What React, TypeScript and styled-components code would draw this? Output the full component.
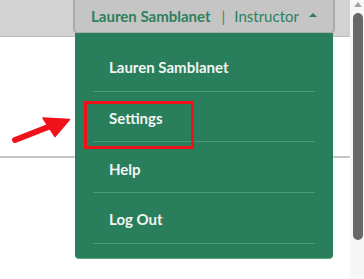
import React from "react";
import styled, { createGlobalStyle } from "styled-components";

const GlobalStyle = createGlobalStyle`
  html, body { margin: 0; padding: 0; background: #ffffff; overflow: hidden; }
  body { font-family: Lato, "Open Sans", "Liberation Sans", sans-serif; }
  * { box-sizing: border-box; }
`;

const Page = styled.div`
  position: relative;
  width: 364px;
  height: 279px;
  display: flex;
  align-items: stretch;
  background: #ffffff;
`;

const Main = styled.div`
  width: 350px;
  display: flex;
  flex-direction: column;
`;

const TopBar = styled.header`
  flex: none;
  height: 37px;
  background: #d2d2d2;
  border-bottom: 1px solid #bcbcbc;
  display: flex;
  justify-content: flex-end;
  align-items: flex-start;
  padding-right: 15px;
`;

const UserMenu = styled.div`
  position: relative;
  width: 262px;
`;

const UserButton = styled.button`
  width: 100%;
  height: 34px;
  margin: 0;
  background: #c5c5c5;
  border: 2px solid #aaacb1;
  border-top: none;
  border-radius: 0 0 5px 5px;
  display: flex;
  align-items: center;
  justify-content: center;
  padding: 0 0 1px 0;
  font-family: Lato, "Open Sans", sans-serif;
  font-size: 15px;
  color: #2d805b;
  cursor: pointer;
`;

const UserName = styled.span`
  font-weight: 700;
`;

const Divider = styled.span`
  margin: 0 9px 0 11px;
  font-weight: 400;
  color: #3a8a64;
`;

const Role = styled.span`
  font-weight: 400;
`;

const Caret = styled.span`
  margin-left: 10px;
  width: 0;
  height: 0;
  border-left: 4px solid transparent;
  border-right: 4px solid transparent;
  border-bottom: 4px solid #2d805b;
  margin-bottom: 2px;
`;

const Dropdown = styled.ul`
  position: absolute;
  top: 33px;
  left: 2px;
  right: 2px;
  margin: 0;
  list-style: none;
  background: #297e5c;
  border-bottom: 1px solid #5ea986;
  border-radius: 0 0 4px 4px;
  padding: 8px 18px 14px;
  z-index: 2;
`;

const MenuItem = styled.li<{ $highlighted?: boolean }>`
  position: relative;
  height: 50.7px;
  padding: 3px 0 0 16px;
  display: flex;
  align-items: center;
  border-bottom: 1px solid #4f9878;
  color: #f2f4f2;
  font-size: 15px;
  font-weight: 700;
  &::after {
    content: "";
    display: ${(p) => (p.$highlighted ? "block" : "none")};
    position: absolute;
    top: 9px;
    left: -9px;
    width: 104px;
    height: 42px;
    border: 3px solid #f0121b;
  }
`;

const Content = styled.div`
  flex: none;
  height: 242px;
  padding-top: 119px;
`;

const Rule = styled.div`
  height: 2px;
  background: #c4c4c4;
`;

const Scrollbar = styled.div`
  width: 14px;
  background: #f7f7f7;
  display: flex;
  flex-direction: column;
  align-items: center;
  padding: 2px 0 0 1px;
`;

const ScrollArrow = styled.span`
  width: 0;
  height: 0;
  border-left: 4.5px solid transparent;
  border-right: 4.5px solid transparent;
  border-bottom: 5px solid #a3a3a3;
`;

const Thumb = styled.div`
  margin-top: 6px;
  width: 10px;
  height: 227px;
  border-radius: 5px;
  background: #686868;
`;

const ArrowMark = styled.svg`
  position: absolute;
  left: 0;
  top: 100px;
  pointer-events: none;
`;

export default function App() {
  const items = ["Lauren Samblanet", "Settings", "Help", "Log Out"];
  return (
    <>
      <GlobalStyle />
      <Page>
        <Main>
          <TopBar>
            <UserMenu>
              <UserButton>
                <UserName>Lauren Samblanet</UserName>
                <Divider>|</Divider>
                <Role>Instructor</Role>
                <Caret />
              </UserButton>
              <Dropdown>
                {items.map((label) => (
                  <MenuItem key={label} $highlighted={label === "Settings"}>
                    {label}
                  </MenuItem>
                ))}
              </Dropdown>
            </UserMenu>
          </TopBar>
          <Content>
            <Rule />
          </Content>
        </Main>
        <Scrollbar>
          <ScrollArrow />
          <Thumb />
        </Scrollbar>
        <ArrowMark width="80" height="50" viewBox="0 0 80 50">
          <line x1="15" y1="40" x2="52" y2="25.5" stroke="#f0121b" strokeWidth="6" strokeLinecap="round" />
          <polygon points="69.5,19.5 43,18 55,36.5" fill="#f0121b" stroke="#f0121b" strokeWidth="1.5" strokeLinejoin="round" />
        </ArrowMark>
      </Page>
    </>
  );
}
